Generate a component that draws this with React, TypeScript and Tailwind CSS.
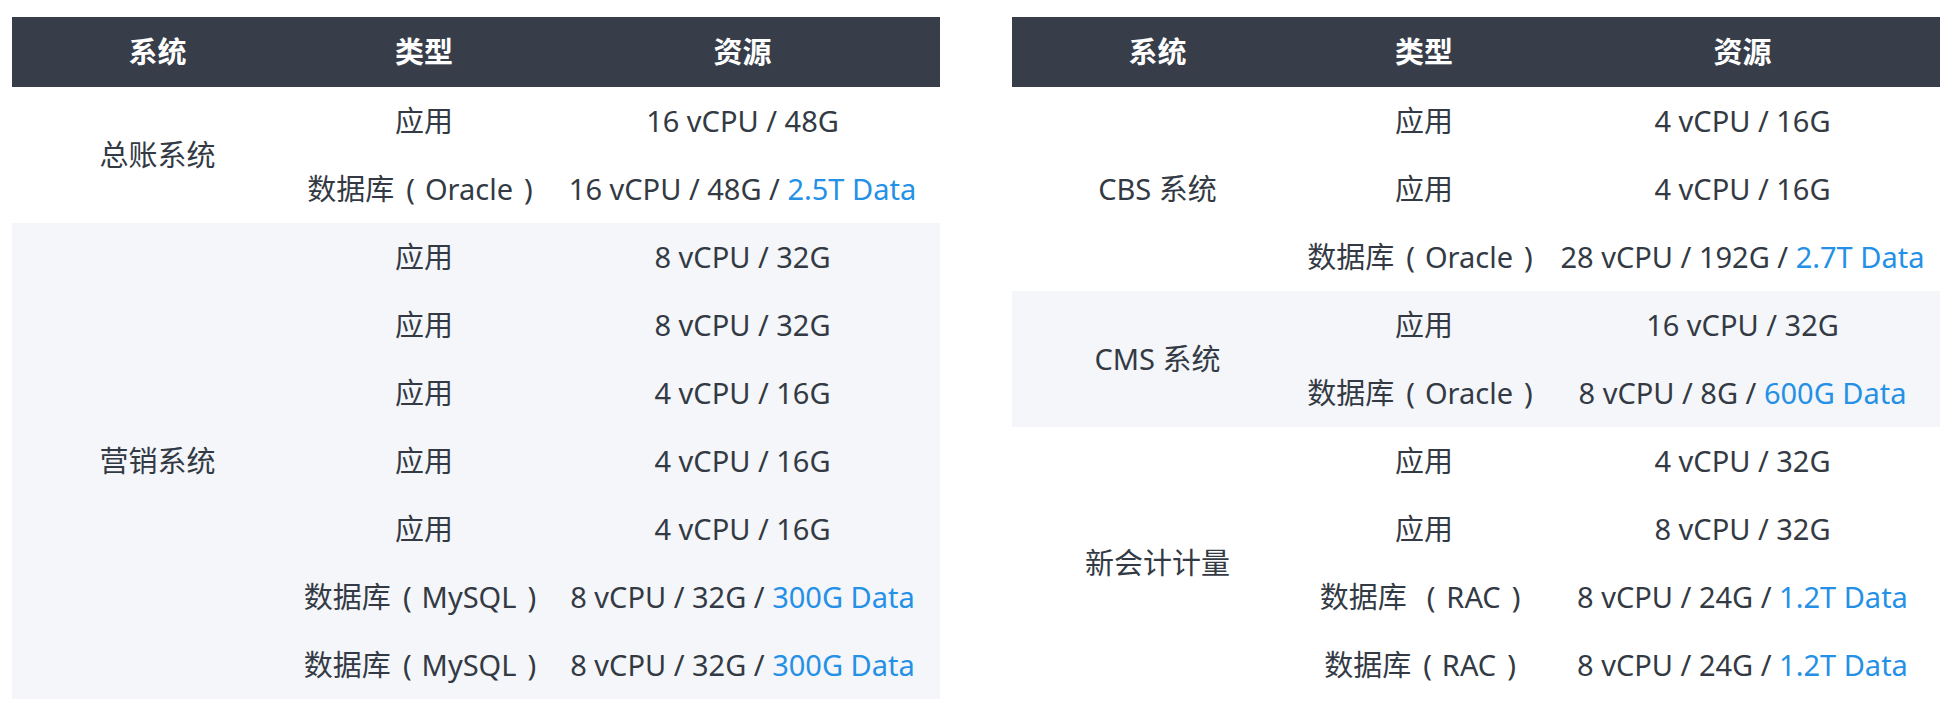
import React from "react";

type Row = { type: string; inner?: string; wide?: boolean; res: string; data?: string };
type Group = { name: string; rows: Row[] };

const left: Group[] = [
  {
    name: "总账系统",
    rows: [
      { type: "应用", res: "16 vCPU / 48G" },
      { type: "数据库", inner: "Oracle", res: "16 vCPU / 48G / ", data: "2.5T Data" },
    ],
  },
  {
    name: "营销系统",
    rows: [
      { type: "应用", res: "8 vCPU / 32G" },
      { type: "应用", res: "8 vCPU / 32G" },
      { type: "应用", res: "4 vCPU / 16G" },
      { type: "应用", res: "4 vCPU / 16G" },
      { type: "应用", res: "4 vCPU / 16G" },
      { type: "数据库", inner: "MySQL", res: "8 vCPU / 32G / ", data: "300G Data" },
      { type: "数据库", inner: "MySQL", res: "8 vCPU / 32G / ", data: "300G Data" },
    ],
  },
];

const right: Group[] = [
  {
    name: "CBS 系统",
    rows: [
      { type: "应用", res: "4 vCPU / 16G" },
      { type: "应用", res: "4 vCPU / 16G" },
      { type: "数据库", inner: "Oracle", res: "28 vCPU / 192G / ", data: "2.7T Data" },
    ],
  },
  {
    name: "CMS 系统",
    rows: [
      { type: "应用", res: "16 vCPU / 32G" },
      { type: "数据库", inner: "Oracle", res: "8 vCPU / 8G / ", data: "600G Data" },
    ],
  },
  {
    name: "新会计计量",
    rows: [
      { type: "应用", res: "4 vCPU / 32G" },
      { type: "应用", res: "8 vCPU / 32G" },
      { type: "数据库", inner: "RAC", wide: true, res: "8 vCPU / 24G / ", data: "1.2T Data" },
      { type: "数据库", inner: "RAC", res: "8 vCPU / 24G / ", data: "1.2T Data" },
    ],
  },
];

function TypeCell({ r }: { r: Row }) {
  if (!r.inner) return <>{r.type}</>;
  return (
    <>
      {r.type}
      <span className={r.wide ? "ml-[20px] mr-[11px]" : "ml-[12px] mr-[10px]"}>(</span>
      {r.inner}
      <span className="ml-[11px] mr-[8px]">)</span>
    </>
  );
}

function ResTable({ groups }: { groups: Group[] }) {
  return (
    <table className="w-[928px] table-fixed border-collapse text-center text-[29px] text-[#333a44]">
      <colgroup>
        <col className="w-[291px]" />
        <col className="w-[242px]" />
        <col className="w-[395px]" />
      </colgroup>
      <thead>
        <tr className="h-[70px] bg-[#373e4a] text-white">
          <th className="p-0 font-bold">系统</th>
          <th className="p-0 font-bold">类型</th>
          <th className="p-0 font-bold">资源</th>
        </tr>
      </thead>
      <tbody>
        {groups.map((g, gi) =>
          g.rows.map((r, ri) => (
            <tr
              key={`${gi}-${ri}`}
              className={`h-[68px] ${gi % 2 === 1 ? "bg-[#f4f6fa]" : "bg-white"}`}
            >
              {ri === 0 && (
                <td rowSpan={g.rows.length} className="p-0 align-middle">
                  {g.name}
                </td>
              )}
              <td className="p-0 whitespace-nowrap align-middle">
                <TypeCell r={r} />
              </td>
              <td className="p-0 whitespace-nowrap align-middle">
                {r.res}
                {r.data && <span className="text-[#2490e6]">{r.data}</span>}
              </td>
            </tr>
          ))
        )}
      </tbody>
    </table>
  );
}

export default function App() {
  return (
    <div className="flex min-h-[718px] w-[1956px] items-start gap-[72px] bg-white pl-[12px] pt-[17px] font-['Noto_Sans','Noto_Sans_CJK_SC',sans-serif]">
      <ResTable groups={left} />
      <ResTable groups={right} />
    </div>
  );
}
